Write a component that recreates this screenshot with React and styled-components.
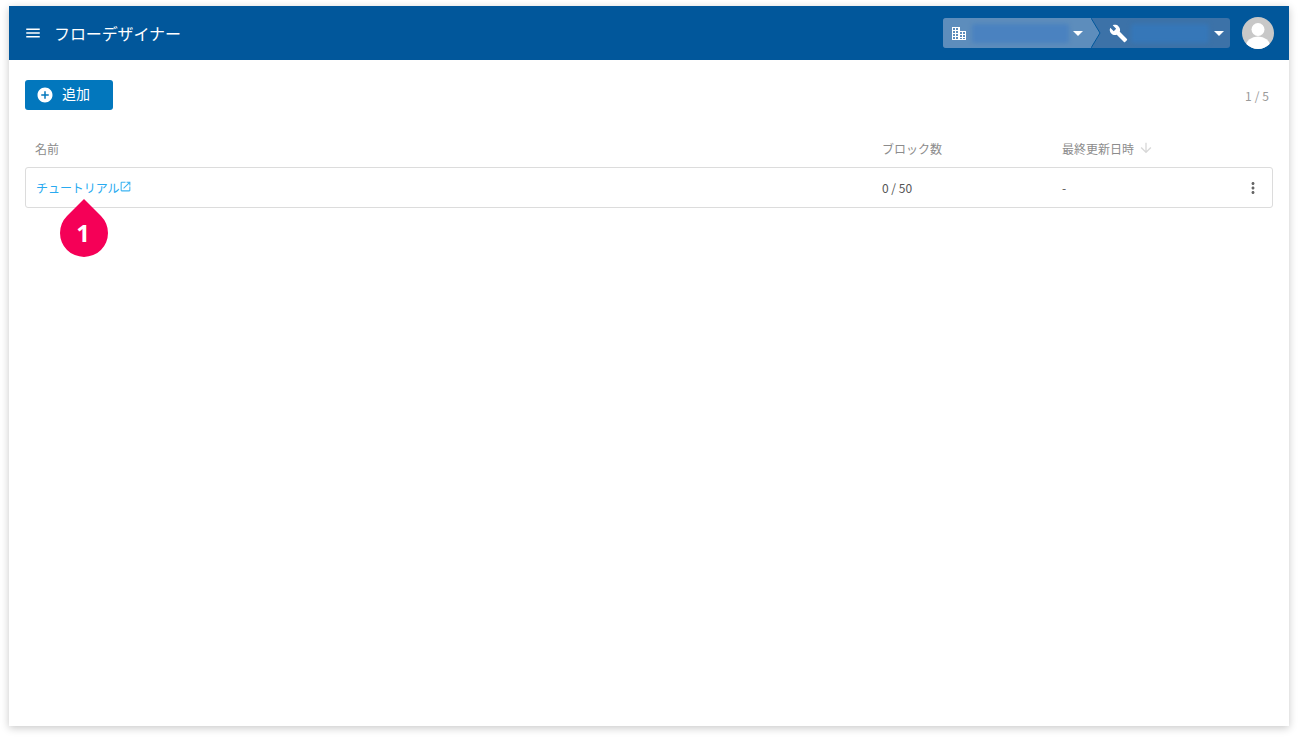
import React from 'react';
import styled, { createGlobalStyle } from 'styled-components';
import { MdMenu, MdBuild, MdAddCircle, MdOpenInNew, MdMoreVert, MdArrowDownward, MdArrowDropDown } from 'react-icons/md';

const Global = createGlobalStyle`
  html, body { margin: 0; padding: 0; background: #fff; }
  body { font-family: "Noto Sans CJK JP", "Noto Sans", sans-serif; }
`;
const Page = styled.div`
  width: 1298px; height: 738px; box-sizing: border-box; padding: 6px 9px 12px; overflow: hidden;
`;
const Panel = styled.main`
  width: 1280px; height: 720px; background: #fff; display: flex; flex-direction: column;
  box-shadow: 0 2px 8px rgba(0,0,0,.22);
`;
const Header = styled.header`
  height: 54px; flex: none; background: #01579b; color: #fff; display: flex; align-items: center;
  padding: 0 15px 0 15px;
`;
const MenuIcon = styled(MdMenu)`
  font-size: 18px; margin-right: 12px; flex: none;
`;
const Title = styled.h1`
  margin: 0; font-size: 16px; font-weight: 400; letter-spacing: -.1px; flex: 1; line-height: 54px;
`;
const Crumbs = styled.div`
  width: 287px; height: 30px; display: flex; border-radius: 3px; overflow: hidden;
  background: #3c72a8; position: relative; margin-right: 12px;
`;
const CrumbFirst = styled.div`
  width: 149px; display: flex; align-items: center; padding-left: 9px; box-sizing: border-box;
  background: #5d8dbc;
`;
const CrumbSecond = styled.div`
  flex: 1; display: flex; align-items: center; padding-left: 17px; box-sizing: border-box;
`;
const Chevron = styled.svg`
  position: absolute; left: 148px; top: 0; width: 10px; height: 30px;
`;
const BuildingIcon = styled.svg`
  width: 14px; height: 13px; flex: none;
`;
const Blurred = styled.span`
  display: block; height: 19px; width: ${p => p.$w}px; margin: 0 -8px 0 ${p => p.$ml}px;
  background: ${p => p.$tone}; filter: blur(2px); border-radius: 2px; flex: none;
`;
const Caret = styled(MdArrowDropDown)`
  font-size: 24px; margin-left: auto; margin-right: ${p => p.$mr}px; flex: none; position: relative;
`;
const Avatar = styled.svg`
  width: 32px; height: 32px; flex: none;
`;
const Body = styled.div`
  flex: 1; padding: 20px 16px 0; display: flex; flex-direction: column;
`;
const Toolbar = styled.div`
  display: flex; justify-content: space-between; align-items: flex-start; height: 30px;
`;
const AddButton = styled.button`
  width: 88px; height: 30px; border: 0; border-radius: 3px; background: #0277bd; color: #fff;
  display: flex; align-items: center; padding: 0 0 0 11px; box-sizing: border-box;
  font: 400 14px "Noto Sans CJK JP", sans-serif; gap: 8px;
  svg { font-size: 18px; }
  span { line-height: 28px; margin-top: -4px; }
`;
const Pager = styled.div`
  font-size: 12px; color: #9a9a9a; line-height: 18px; margin-top: 7px; margin-right: 4px; letter-spacing: .1px;
`;
const HeadRow = styled.div`
  margin-top: 30px; height: 27px; display: grid; grid-template-columns: 847px 180px 1fr;
  font-size: 12px; color: #8c8c8c; padding-left: 10px; align-items: start; line-height: 18px;
`;
const SortIcon = styled(MdArrowDownward)`
  font-size: 16px; color: #d8d8d8; margin-left: 4px; vertical-align: -2px;
`;
const Row = styled.div`
  position: relative; height: 41px; box-sizing: border-box; border: 1px solid #dcdcdc; border-radius: 3px;
  display: grid; grid-template-columns: 845px 180px 1fr 28px; align-items: center; padding-left: 11px;
  font-size: 12px; color: #555;
`;
const NameLink = styled.a`
  color: #29aaf0; display: inline-flex; align-items: flex-start; line-height: 18px; margin-top: -2px;
  margin-left: -1px; letter-spacing: -.05px;
  svg { font-size: 13px; margin-top: 1px; margin-left: -1px; color: #3db4f2; }
`;
const Kebab = styled(MdMoreVert)`
  font-size: 18px; color: #666;
`;
const Pin = styled.div`
  position: absolute; left: 34px; top: 31px; width: 48px; height: 58px;
  svg { position: absolute; inset: 0; }
  span {
    position: absolute; left: 0; right: 2px; top: 18px; text-align: center; color: #fff;
    font: 700 24px/32px "Noto Sans", sans-serif;
  }
`;

export default function App() {
  return (
    <Page>
      <Global />
      <Panel>
        <Header>
          <MenuIcon />
          <Title>フローデザイナー</Title>
          <Crumbs>
            <CrumbFirst>
              <BuildingIcon viewBox="0 0 14 13">
                <path fill="#fff" fillRule="evenodd" d="M0 0h8v4h6v9H0z M1 1v2h2V1z M4 1v2h2V1z M1 4v2h2V4z M4 4v2h2V4z M1 7v2h2V7z M4 7v2h2V7z M1 10v2h2v-2z M4 10v2h2v-2z M8 5v2h2V5z M11 5v2h2V5z M8 8v2h2V8z M11 8v2h2V8z M8 11v1h2v-1z M11 11v1h2v-1z" />
              </BuildingIcon>
              <Blurred $w={97} $ml={6} $tone="#4a82c0" />
              <Caret $mr={2} />
            </CrumbFirst>
            <CrumbSecond>
              <MdBuild size={19} />
              <Blurred $w={78} $ml={3} $tone="#3677b8" />
              <Caret $mr={-1} />
            </CrumbSecond>
            <Chevron viewBox="0 0 10 30">
              <path d="M0 0 L9 15 L0 30 Z" fill="#5d8dbc" />
              <path d="M0 0 L9 15 L0 30" fill="none" stroke="#01579b" strokeWidth="1" />
            </Chevron>
          </Crumbs>
          <Avatar viewBox="0 0 32 32">
            <defs><clipPath id="av"><circle cx="16" cy="16" r="16" /></clipPath></defs>
            <circle cx="16" cy="16" r="16" fill="#c8c8c8" />
            <g clipPath="url(#av)" fill="#fff">
              <circle cx="16" cy="12.5" r="6.5" />
              <ellipse cx="16" cy="29" rx="12" ry="9.5" />
            </g>
          </Avatar>
        </Header>
        <Body>
          <Toolbar>
            <AddButton><MdAddCircle /><span>追加</span></AddButton>
            <Pager>1 / 5</Pager>
          </Toolbar>
          <HeadRow>
            <span>名前</span>
            <span>ブロック数</span>
            <span>最終更新日時<SortIcon /></span>
          </HeadRow>
          <Row>
            <div><NameLink>チュートリアル<MdOpenInNew /></NameLink></div>
            <span>0 / 50</span>
            <span>-</span>
            <Kebab />
            <Pin>
              <svg viewBox="0 0 48 58" width="48" height="58">
                <path d="M24 0 L41 17 A24 24 0 1 1 7 17 Z" fill="#f50057" />
              </svg>
              <span>1</span>
            </Pin>
          </Row>
        </Body>
      </Panel>
    </Page>
  );
}
